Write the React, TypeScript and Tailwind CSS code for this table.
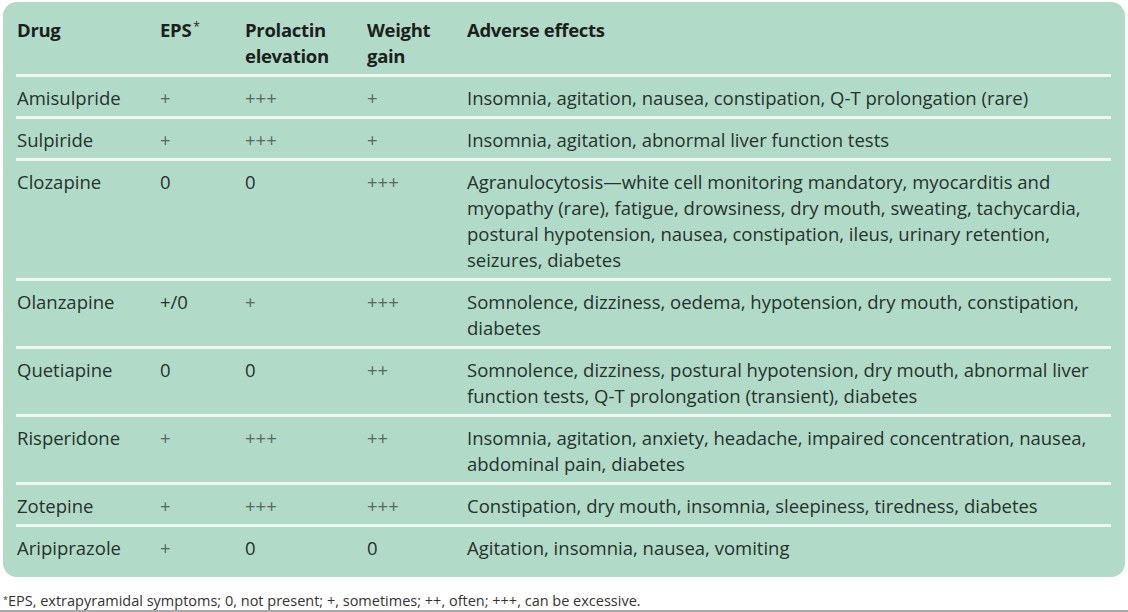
import React from 'react';

type Row = {
  drug: string;
  eps: string;
  prolactin: string;
  weight: string;
  effects: string[];
};

const ROWS: Row[] = [
  {
    drug: 'Amisulpride',
    eps: '+',
    prolactin: '+++',
    weight: '+',
    effects: ['Insomnia, agitation, nausea, constipation, Q-T prolongation (rare)'],
  },
  {
    drug: 'Sulpiride',
    eps: '+',
    prolactin: '+++',
    weight: '+',
    effects: ['Insomnia, agitation, abnormal liver function tests'],
  },
  {
    drug: 'Clozapine',
    eps: '0',
    prolactin: '0',
    weight: '+++',
    effects: [
      'Agranulocytosis\u2014white cell monitoring mandatory, myocarditis and',
      'myopathy (rare), fatigue, drowsiness, dry mouth, sweating, tachycardia,',
      'postural hypotension, nausea, constipation, ileus, urinary retention,',
      'seizures, diabetes',
    ],
  },
  {
    drug: 'Olanzapine',
    eps: '+/0',
    prolactin: '+',
    weight: '+++',
    effects: [
      'Somnolence, dizziness, oedema, hypotension, dry mouth, constipation,',
      'diabetes',
    ],
  },
  {
    drug: 'Quetiapine',
    eps: '0',
    prolactin: '0',
    weight: '++',
    effects: [
      'Somnolence, dizziness, postural hypotension, dry mouth, abnormal liver',
      'function tests, Q-T prolongation (transient), diabetes',
    ],
  },
  {
    drug: 'Risperidone',
    eps: '+',
    prolactin: '+++',
    weight: '++',
    effects: [
      'Insomnia, agitation, anxiety, headache, impaired concentration, nausea,',
      'abdominal pain, diabetes',
    ],
  },
  {
    drug: 'Zotepine',
    eps: '+',
    prolactin: '+++',
    weight: '+++',
    effects: ['Constipation, dry mouth, insomnia, sleepiness, tiredness, diabetes'],
  },
  {
    drug: 'Aripiprazole',
    eps: '+',
    prolactin: '0',
    weight: '0',
    effects: ['Agitation, insomnia, nausea, vomiting'],
  },
];

const GRID = 'grid grid-cols-[143px_85px_122px_100px_1fr]';

// "+" marks render lighter than the digits
function Mark({ value }: { value: string }) {
  const light = value.includes('+') && !value.includes('0');
  return <div className={light ? 'text-[#566862]' : ''}>{value}</div>;
}

export default function App() {
  return (
    <div className="w-[1128px] h-[612px] bg-white font-['Open_Sans','Liberation_Sans',sans-serif] relative">
      <div className="absolute left-0 right-0 top-[2px] px-[3px]">
        <div className="bg-[#b2dac8] rounded-[14px] pt-[15px] pb-[11px] text-[18.5px] leading-[26px] text-[#24332d]">
          {/* header */}
          <div className={`${GRID} px-[14px] pb-[5px] font-bold text-[#1b1f1d] tracking-[-0.3px]`}>
            <div>Drug</div>
            <div>
              EPS<span className="text-[12px] font-normal align-top relative -top-[3px] ml-[2px]">*</span>
            </div>
            <div>
              Prolactin
              <br />
              elevation
            </div>
            <div>
              Weight
              <br />
              gain
            </div>
            <div>Adverse effects</div>
          </div>

          {ROWS.map((r) => (
            <div key={r.drug}>
              <div className="mx-[13px] mr-[14px] h-[3px] bg-[#eef7f2]" />
              <div className={`${GRID} px-[14px] pt-[8px] pb-[5px]`}>
                <div>{r.drug}</div>
                <Mark value={r.eps} />
                <Mark value={r.prolactin} />
                <Mark value={r.weight} />
                <div className="whitespace-nowrap">
                  {r.effects.map((line) => (
                    <div key={line}>{line}</div>
                  ))}
                </div>
              </div>
            </div>
          ))}
        </div>
      </div>

      <div className="absolute left-0 right-0 bottom-0 h-[21px] border-b-[2px] border-[#a9a9a9] pl-[3px] text-[14.5px] leading-[19px] text-[#333]">
        <span className="text-[9px] align-top relative -top-[1px]">*</span>EPS, extrapyramidal symptoms; 0, not present; +, sometimes; ++, often; +++, can be excessive.
      </div>
    </div>
  );
}
